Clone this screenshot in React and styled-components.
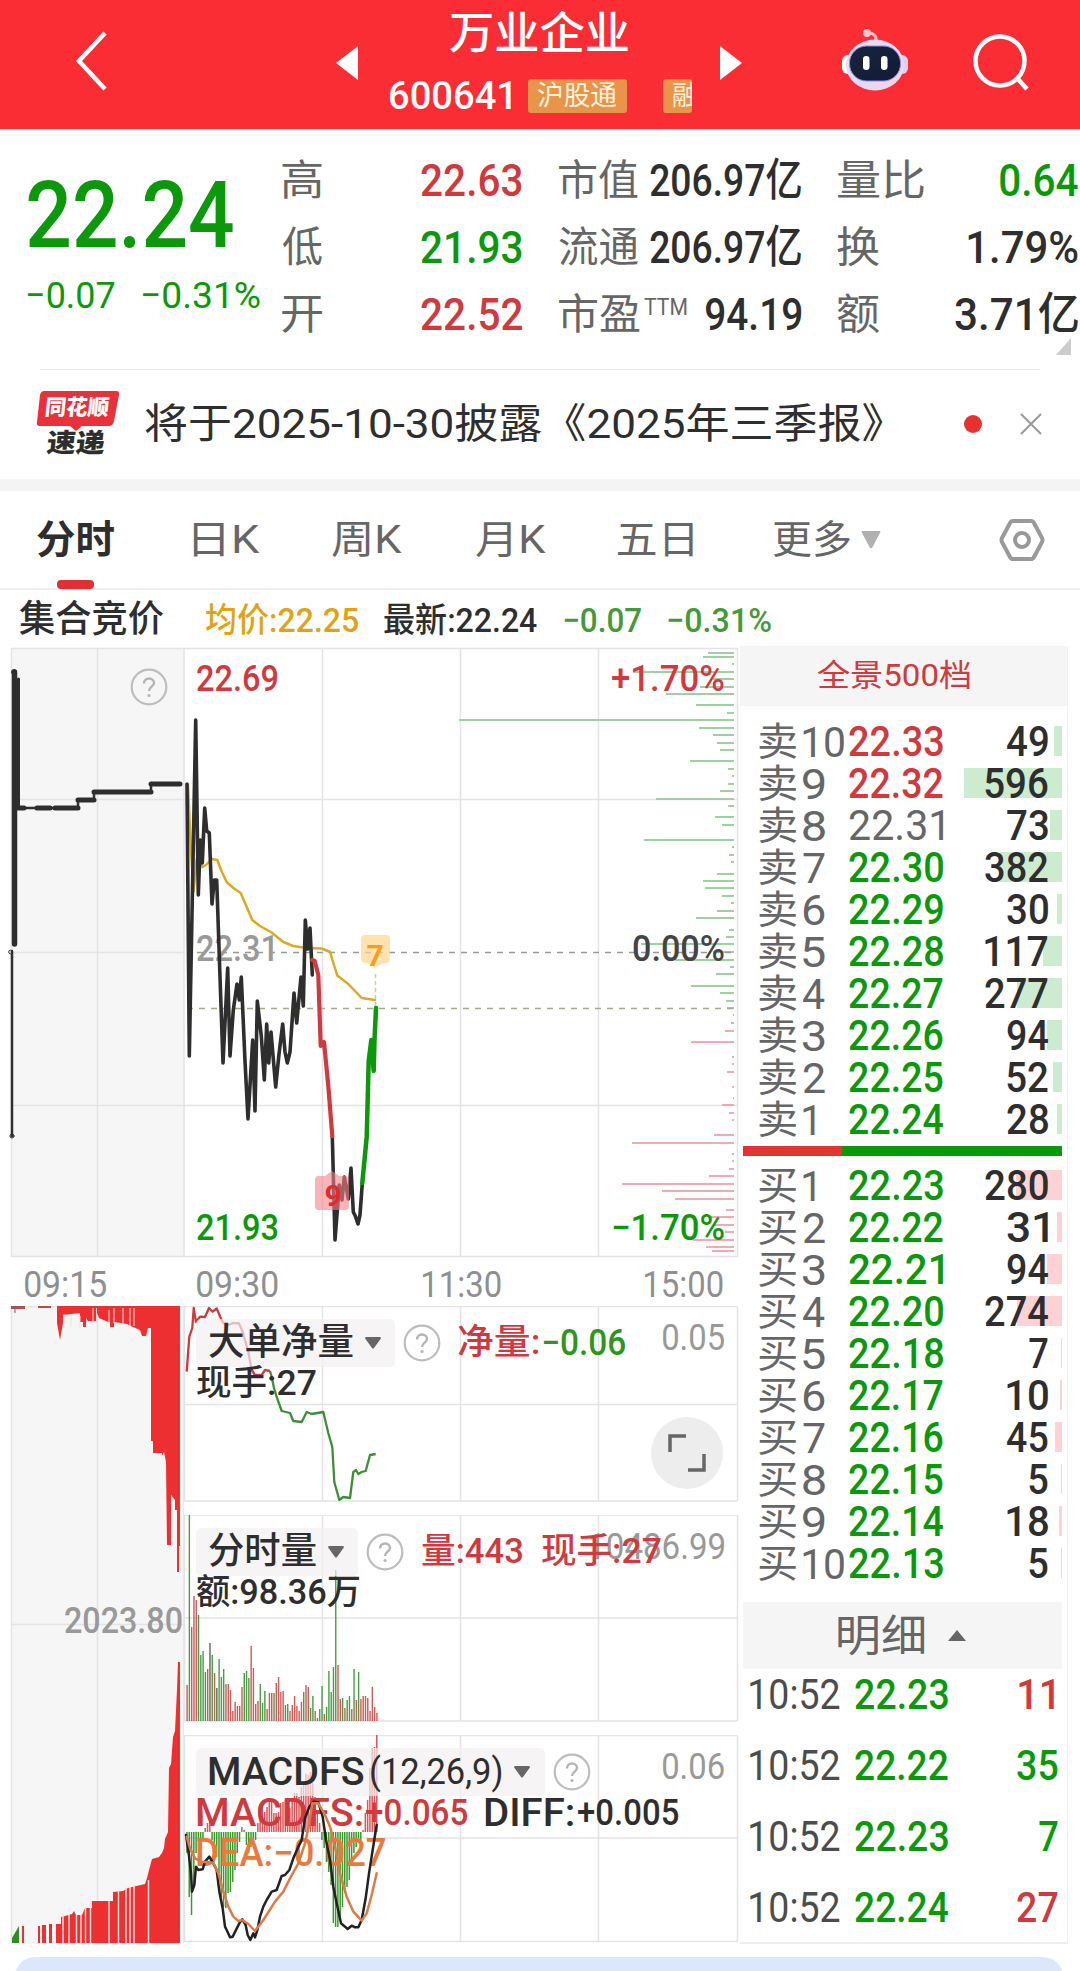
import React, { useLayoutEffect, useRef, useState } from "react";
import styled, { createGlobalStyle } from "styled-components";

const RED = "#d03a3e";
const GREEN = "#0b980b";
const DARK = "#2e2e2e";
const GREY = "#666";
const GRID = "#e4e4e6";

const sells = [
  ["卖10", "22.33", 49, RED],
  ["卖9", "22.32", 596, RED],
  ["卖8", "22.31", 73, GREY],
  ["卖7", "22.30", 382, GREEN],
  ["卖6", "22.29", 30, GREEN],
  ["卖5", "22.28", 117, GREEN],
  ["卖4", "22.27", 277, GREEN],
  ["卖3", "22.26", 94, GREEN],
  ["卖2", "22.25", 52, GREEN],
  ["卖1", "22.24", 28, GREEN],
];

const buys = [
  ["买1", "22.23", 280, GREEN],
  ["买2", "22.22", 31, GREEN],
  ["买3", "22.21", 94, GREEN],
  ["买4", "22.20", 274, GREEN],
  ["买5", "22.18", 7, GREEN],
  ["买6", "22.17", 10, GREEN],
  ["买7", "22.16", 45, GREEN],
  ["买8", "22.15", 5, GREEN],
  ["买9", "22.14", 18, GREEN],
  ["买10", "22.13", 5, GREEN],
];

// price, quantity, colour, drawn width of the quantity
const deals = [
  ["22.23", "11", RED, 35],
  ["22.22", "35", GREEN, 41],
  ["22.23", "7", GREEN, 19],
  ["22.24", "27", RED, 41],
];

// [y, length] of the price distribution bars
const distUp = [
  [653, 26], [657, 31], [664, 2], [672, 101], [679, 21], [687, 34], [694, 68],
  [705, 38], [713, 7], [720, 275], [728, 35], [735, 21], [743, 17], [750, 14],
  [761, 44], [769, 6], [776, 2], [784, 6], [791, 14], [799, 78], [806, 6],
  [817, 19], [825, 12], [840, 90], [847, 2], [855, 5], [862, 3], [874, 17],
  [881, 31], [888, 29], [896, 12], [903, 3], [911, 17], [918, 38], [930, 5],
  [937, 8], [944, 93], [952, 21], [960, 59], [967, 4], [974, 18], [986, 43],
  [993, 14], [1001, 8], [1008, 7],
];
const distDown = [
  [1015, 1], [1023, 3], [1031, 9], [1042, 43], [1057, 2], [1064, 2], [1072, 7],
  [1087, 2], [1098, 1], [1105, 12], [1113, 5], [1120, 2], [1135, 20],
  [1143, 102], [1154, 2], [1161, 2], [1169, 5], [1176, 25], [1184, 112],
  [1191, 72], [1199, 59], [1210, 8], [1217, 26], [1225, 21], [1232, 9],
  [1240, 41], [1247, 28], [1251, 22],
];

const priceA =
  "187,784 189.3,1056 195.7,720 198.3,895 200.3,840 202.3,863 204.7,808 206.7,831 209.3,833 212,904 214.3,880 216.7,880 220,977 223,1063 227.7,968 230,1056 233.3,1010 237,984 239.3,1000 241.3,977 245,1061 248,1119 252.7,1040 255,1111 257.3,1001 261.3,1036 264.3,1080 266.7,1024 268.7,1063 271,1032 275.7,1087 279,1054 282.7,1024 285,1052 287.3,1063 290,1052 294,993 296.7,1023 301,977 303.3,1006 305.3,920 307.7,949 310,928 312.3,975";
const priceRed =
  "312.3,960 314.7,961 318.3,975 320.7,1046 324,1042 328.3,1086 332.3,1136";
const priceB =
  "332.3,1136 335,1240 339.3,1185 342,1200 344.3,1177 348.3,1199 351,1168 353.3,1212 355.3,1216 358,1224 360,1215 362.3,1183";
const priceGreen =
  "362.3,1183 366.7,1137 368.7,1061 371.3,1040 373.7,1071 374.5,1040 376,1008";
const average =
  "188,785 191,850 193.5,892 196.7,859 202.3,867 206,865 211.7,859 217.3,860 221.7,871.5 226.7,882 233.3,888 240.7,893 246.7,907 252.3,920 260,926 271.7,932.5 283.3,942 293.3,946 306.7,948 321.7,948.5 330,952 334.3,966 337.3,975.5 348.3,984 361.7,998 375,1000";

const netRed =
  "186.7,1371.7 189.3,1336.7 192.3,1328 193.7,1308 196,1322 200,1316.7 205,1317 209,1308 212.7,1311.7 216.7,1308.5 220.7,1318 223.3,1323 228,1325 233.3,1323 239,1323.5 242.7,1332 248.3,1352 251.7,1370 255,1375 261.7,1375 265,1370 270,1371";
const netGreen =
  "270,1371 271.7,1377 274,1388 276.7,1397 281.7,1411 290,1413 293.3,1421 301.7,1422 306.7,1412 311.7,1414 323.3,1412 328.3,1433 332.3,1447 334.3,1482 339.3,1500 343.3,1497 350,1498 353.3,1472 356,1470 358.3,1474 361.7,1472 365.7,1471 370,1455 375.7,1454";

const volumes =
  "36r 207g 94r 125r 121r 106g 66g 70g 49g 52r 78k 66g 48r 33k 62g 44g 52g 37r 37r 31r 10r 19r 15r 15r 34r 48g 50g 43g 75r 53r 17r 20r 37g 18g 30g 12r 28r 28r 28g 38r 44r 29r 30r 16g 17g 10r 16r 25r 15r 10r 19r 29g 36r 34r 13g 25g 10r 3g 12g 35g 7r 14g 50g 29g 54g 151g 56r 22r 23g 13r 21g 25g 12r 52g 21r 49g 22r 25r 25r 23r 10r 34r 14r 8r"
    .split(" ");

// signed bar heights around the zero line
const macd = [
  -21, -65, -83, -53, -21, -9, -8, -6, 4, 9, 11, -8, -15, -25, -41, -65, -75,
  -76, -61, -60, -50, -38, -21, -10, 5, 2, -13, -21, -15, -11, -8, 9, 17, 12,
  20, 25, 32, 30, 19, 19, 20, 29, 30, 32, 25, 24, 32, 39, 39, 35, 45, 50, 58,
  57, 60, 49, 35, 22, 9, -8, -16, -30, -40, -53, -91, -95, -95, -85, -75, -61,
  -55, -48, -31, -21, -15, -11, -8, 2, 19, 32, 64, 84, 85, 98,
];

// drawn on a grid three times finer than a pixel
const diffLine =
  "558,585 566,640 573,700 576,755 583,735 588,680 595,690 608,688 615,665 628,650 640,670 650,690 658,755 668,805 675,860 680,870 690,892 698,890 707,872 718,850 727,838 737,855 743,885 751,900 760,880 765,892 772,870 780,830 790,800 800,780 815,755 830,750 845,708 855,705 868,690 880,655 893,625 905,600 915,535 928,500 940,485 955,487 968,530 978,600 990,660 1000,740 1010,790 1023,850 1035,860 1043,867 1055,857 1065,862 1075,862 1085,840 1097,775 1107,700 1118,630 1130,555";
const deaLine =
  "560,590 570,625 585,655 605,665 640,668 655,700 670,755 685,800 700,830 715,843 727,840 745,852 765,873 790,840 825,785 850,755 870,715 895,670 915,610 925,565 937,490 955,490 975,525 990,560 1005,620 1020,700 1040,770 1060,815 1085,842 1100,820 1115,765 1130,700";

const auctionTop =
  "57,1306 57,1323 60,1340 63,1323 63,1315 80,1313 80,1322 83,1322 83,1327 86,1327 86,1318 88,1321 96,1321 97,1313 99,1318 108,1322 110,1322 110,1327 114,1327 114,1322 127,1324 133,1327 140,1330 142,1336 146,1336 148,1328 151,1328 151,1441 153,1441 153,1453 162,1453 162,1456 164,1452 166,1462 167,1545 171,1545 171,1495 175,1500 175,1510 177,1510 177,1572 179,1572 179,1546 180,1546 180,1306";
const auctionBottom =
  "56,1943 56,1924 61,1924 61,1917 65,1916 72,1914 74,1911 76,1915 82,1915 85,1908 92,1908 92,1901 113,1901 113,1892 123,1891 128,1888 145,1884 147,1878 149,1870 152,1859 159,1857 162,1853 164,1848 165,1839 168,1832 169,1768 171,1764 173,1737 175,1731 177,1690 178,1662 180,1662 180,1943";

// Squeezes a run of text horizontally so that its ink is exactly w wide
const Fit = ({ w, children, ...rest }) => {
  const ref = useRef(null);
  const [transform, setTransform] = useState("none");

  useLayoutEffect(() => {
    const css = getComputedStyle(ref.current);
    const ctx = document.createElement("canvas").getContext("2d");
    ctx.font = `${css.fontWeight} ${css.fontSize} ${css.fontFamily}`;
    const m = ctx.measureText(ref.current.textContent);
    const ink = m.actualBoundingBoxLeft + m.actualBoundingBoxRight;
    const k = w / ink;
    setTransform(`translateX(${m.actualBoundingBoxLeft * k}px) scaleX(${k})`);
  }, [w, children]);

  return (
    <FitBox $w={w} {...rest}>
      <FitInner ref={ref} style={{ transform }}>
        {children}
      </FitInner>
    </FitBox>
  );
};

const Help = () => (
  <HelpIcon viewBox="0 0 38 38">
    <circle cx="19" cy="19" r="17.3" fill="none" stroke="#bdbdbd" strokeWidth="2.2" />
    <path
      d="M14 15.5c0-3 2.200-5 5-5s5 1.900 5 4.500c0 3.500-5 4-5 8"
      fill="none"
      stroke="#b4b4b4"
      strokeWidth="2.400"
    />
    <circle cx="19" cy="27.500" r="1.600" fill="#b4b4b4" />
  </HelpIcon>
);

const Header = () => (
  <TopBar>
    <svg width="36" height="62" viewBox="0 0 36 62">
      <path d="M32 3 6 31l26 28" fill="none" stroke="#fff" strokeWidth="4.500" />
    </svg>
    <Triangle $ml={227} viewBox="0 0 22 34">
      <path d="M22 0v34L0 17z" fill="#fff" />
    </Triangle>
    <TitleBlock>
      <Fit w={178} $size={44} $weight={500}>万业企业</Fit>
      <CodeRow>
        <Fit w={121} $size={39} $weight={500}>600641</Fit>
        <Tag $w={99} $ml={17}>
          <Fit w={79} $size={27}>沪股通</Fit>
        </Tag>
        <Tag $w={29} $ml={36}>
          <Fit w={25} $size={27}>融</Fit>
        </Tag>
      </CodeRow>
    </TitleBlock>
    <Triangle $ml={29} viewBox="0 0 22 34">
      <path d="M0 0v34l22-17z" fill="#fff" />
    </Triangle>
    <Robot />
    <SearchIcon viewBox="0 0 60 60">
      <circle cx="27" cy="27" r="24.500" />
      <path d="m44 44 10 11" />
    </SearchIcon>
  </TopBar>
);

const Robot = () => (
  <RobotSvg viewBox="0 0 68 64">
    <defs>
      <linearGradient id="shell" x1="0" y1="0" x2="1" y2="1">
        <stop offset="0" stopColor="#fdd9e6" />
        <stop offset="0.5" stopColor="#dcdcfb" />
        <stop offset="1" stopColor="#ffd0dc" />
      </linearGradient>
      <linearGradient id="visor" x1="0" y1="0" x2="1" y2="1">
        <stop offset="0" stopColor="#16253f" />
        <stop offset="1" stopColor="#141a35" />
      </linearGradient>
    </defs>
    <path d="M35 14c1-7-3-9-8-9" fill="none" stroke="#ffb9c8" strokeWidth="3" />
    <circle cx="26" cy="5" r="4" fill="#ffc3d0" />
    <rect x="1" y="27" width="12" height="19" rx="6" fill="#fff" />
    <rect x="55" y="27" width="12" height="19" rx="6" fill="#e9ccf4" />
    <ellipse cx="34" cy="37" rx="29" ry="25.500" fill="url(#shell)" />
    <rect x="8.500" y="18" width="51" height="35" rx="17" fill="url(#visor)" stroke="#8d8bea" strokeWidth="1" />
    <rect x="22" y="28" width="6.500" height="14" rx="3.200" fill="#fff" />
    <rect x="40" y="28" width="6.500" height="14" rx="3.200" fill="#fff" />
  </RobotSvg>
);

const Quote = () => (
  <QuoteBox>
    <PriceBlock>
      <Fit w={205} $size={93} $lh={80} $weight={500}>22.24</Fit>
      <ChangeRow>
        <Fit w={87} $size={37}>−0.07</Fit>
        <Fit w={117} $size={37}>−0.31%</Fit>
      </ChangeRow>
    </PriceBlock>
    <StatColumn>
      <Stat label="高" lw={40} value="22.63" w={101} color={RED} />
      <Stat label="低" lw={40} value="21.93" w={101} color={GREEN} />
      <Stat label="开" lw={40} value="22.52" w={101} color={RED} />
    </StatColumn>
    <StatColumn>
      <Stat label="市值" lw={79} value="206.97亿" w={151} color={DARK} />
      <Stat label="流通" lw={79} value="206.97亿" w={151} color={DARK} />
      <Stat label="市盈" lw={81} sup="TTM" value="94.19" w={95} color={DARK} />
    </StatColumn>
    <StatColumn>
      <Stat label="量比" lw={87} value="0.64" w={78} color={GREEN} />
      <Stat label="换" lw={42} value="1.79%" w={110} color={DARK} />
      <Stat label="额" lw={42} value="3.71亿" w={123} color={DARK} />
    </StatColumn>
    <Corner viewBox="0 0 15 17">
      <path d="M15 0v17H0z" fill="#ccc" />
    </Corner>
  </QuoteBox>
);

const Stat = ({ label, lw, sup, value, w, color }) => (
  <StatRow>
    <StatLabel>
      <Fit w={lw} $size={42} $color={GREY}>{label}</Fit>
      {sup && (
        <Sup>
          <Fit w={43} $size={23} $color={GREY}>{sup}</Fit>
        </Sup>
      )}
    </StatLabel>
    <Fit w={w} $size={45} $weight={500} $color={color}>{value}</Fit>
  </StatRow>
);

const Notice = () => (
  <NoticeBar>
    <Logo>
      <LogoShape viewBox="0 0 84 66">
        <path d="M8 0h72q4 0 3 4l-5 26q-1 5-5 5H46l-6 5-6-5H4q-4 0-3-4L4 4q1-4 4-4z" fill="#e8313a" />
      </LogoShape>
      <LogoTop><Fit w={63} $size={22} $lh={22} $weight={900} $color="#fff">同花顺</Fit></LogoTop>
      <LogoBottom><Fit w={58} $size={26} $lh={26} $weight={900}>速递</Fit></LogoBottom>
    </Logo>
    <Fit w={738} $size={41} $color={DARK}>将于2025-10-30披露《2025年三季报》</Fit>
    <Dot />
    <svg width="24" height="24" viewBox="0 0 24 24">
      <path d="m2 2 20 20M22 2 2 22" stroke="#999" strokeWidth="2" />
    </svg>
  </NoticeBar>
);

const Tabs = () => (
  <TabBar>
    <Tab $active $ml={37}><Fit w={77} $size={39} $weight={700}>分时</Fit></Tab>
    <Tab $ml={79}><Fit w={67} $size={39}>日K</Fit></Tab>
    <Tab $ml={72}><Fit w={70} $size={39}>周K</Fit></Tab>
    <Tab $ml={74}><Fit w={70} $size={39}>月K</Fit></Tab>
    <Tab $ml={72}><Fit w={75} $size={39}>五日</Fit></Tab>
    <Tab $ml={80}>
      <Fit w={77} $size={39}>更多</Fit>
      <svg width="20" height="18" viewBox="0 0 20 18">
        <path d="M1 0h18q1 1 0 2l-8 15h-2L1 2Q0 1 1 0z" fill="#b0b0b0" />
      </svg>
    </Tab>
    <Settings viewBox="0 0 46 44">
      <path d="M14 3h18q2 0 3 2l8 15q1 2 0 4l-8 15q-1 2-3 2H14q-2 0-3-2L3 24q-1-2 0-4l8-15q1-2 3-2z" />
      <circle cx="23" cy="22" r="7" />
    </Settings>
  </TabBar>
);

const Bars = ({ rows, color }) =>
  rows.map(([y, len]) => (
    <rect key={y} x={734 - len} y={y - 1} width={len} height="2" fill={color} />
  ));

const Label = ({ x, y, w, color, children }) => (
  <ChartText x={x} y={y} textLength={w} lengthAdjust="spacingAndGlyphs" fill={color}>
    {children}
  </ChartText>
);

const PriceChart = () => (
  <Chart width="740" height="611" viewBox="0 647 740 611">
    <rect x="11" y="648" width="173" height="609" fill="#f6f6f6" />
    <g stroke={GRID} strokeWidth="1.500">
      <path d="M11 648.500H737M11 799.500H737M11 952.500H184M11 1105.500H737M11 1256.500H737" />
      <path d="M11.500 648V1257M97.500 648V1257M184 648V1257M322.500 648V1257M460.500 648V1257M598.500 648V1257M737.500 648V1257" />
    </g>
    <Bars rows={distUp} color="#a0cfa2" />
    <Bars rows={distDown} color="#f0abb2" />
    <Label x={196} y={961} w={83} color="#999">22.31</Label>
    <path d="M197 952.500H737" stroke="#999" strokeWidth="1.600" strokeDasharray="6 6" />
    <path d="M187 1008.500H737" stroke="#a3ad8b" strokeWidth="1.600" strokeDasharray="6 6" />
    <path d="M375.500 974V1008" stroke="#d8c9a0" strokeWidth="1.500" strokeDasharray="4 3" />

    <g fill="none" stroke={DARK} strokeLinejoin="round" strokeLinecap="round">
      <path d="M12 951V1136" strokeWidth="2.500" />
      <path d="M14.500 672V944" strokeWidth="5.500" />
      <path d="M18.500 679V808" strokeWidth="3" />
      <path d="M18 808H24M37 808H50M55 808H78M78 800H94M94 792H151M151 784H180" strokeWidth="5" />
      <path d="M18 808H78V800H94V792H151V784" strokeWidth="2.500" />
      <circle cx="14" cy="672" r="2.500" />
      <circle cx="10.500" cy="952" r="1.800" />
      <circle cx="12" cy="1136" r="2" />
    </g>

    <g fill="none" strokeWidth="3.600" strokeLinejoin="round" strokeLinecap="round">
      <polyline points={average} stroke="#dca921" strokeWidth="2.500" />
      <polyline points={priceA} stroke={DARK} />
      <polyline points={priceB} stroke={DARK} />
      <polyline points={priceRed} stroke={RED} strokeWidth="4.200" />
      <polyline points={priceGreen} stroke={GREEN} strokeWidth="4.500" />
    </g>

    <path d="M365 935h21q4 0 4 4v20q0 4-4 4h-3l-8 5-7-5h-3q-4 0-4-4v-20q0-4 4-4z" fill="#ffd68e" fillOpacity="0.7" transform="translate(0 -1) scale(1 1.001)" />
    <BadgeText x="375" y="966" fill="#f0a21c">7</BadgeText>
    <path d="M319 1176h6l7-5 7 5h6q4 0 4 4v26q0 4-4 4h-26q-4 0-4-4v-26q0-4 4-4z" fill="#f58289" fillOpacity="0.6" />
    <BadgeText x="333" y="1206" fill="#dc2c30">9</BadgeText>

    <Label x={196} y={691} w={83} color={RED}>22.69</Label>
    <Label x={196} y={1240} w={83} color={GREEN}>21.93</Label>
    <Label x={611} y={691} w={114} color={RED}>+1.70%</Label>
    <Label x={632} y={961} w={93} color="#444">0.00%</Label>
    <Label x={611} y={1240} w={114} color={GREEN}>−1.70%</Label>
  </Chart>
);

const AuctionVolume = () => (
  <Chart width="184" height="638" viewBox="0 1306 184 638">
    <rect x="11" y="1306" width="173" height="638" fill="#f6f6f6" />
    <path d="M11.500 1306V1943M97.500 1306V1943M184 1306V1943M11 1306.500H184M11 1624.500H184" stroke={GRID} strokeWidth="1.500" />
    <g fill="#ee2f31">
      <path d="M11 1306h14v3H11zM38 1306h13v2H38z" fill="#b2514c" />
      <polygon points={auctionTop} />
      <polygon points={auctionBottom} />
      <path d="M22 1926h2v17h-2zM38 1926h2v17h-2zM42 1925h4v18h-4zM49 1924h3v19h-3z" />
      <path d="M12 1943v-5l7-12v17z" fill="#2f8d28" />
      <path d="M15 1306v7" stroke="#666" />
    </g>
    <path
      d="M64 1314v14M71 1315v12M80 1316v12M93 1308v14M96.500 1308v14M109 1310v14M114 1308v15M123 1308v16M130 1308v18M134 1308v18"
      stroke="#f6dcdc"
      strokeWidth="1"
    />
    <path
      d="M63 1913v30M69 1913v30M76.500 1914v29M81 1914v29M85.500 1908v35M90.500 1900v43M109 1900v43M118.500 1890v53M126 1887v56M130 1886v57M134 1885v58M148.500 1880v63"
      stroke="#f9e3e3"
      strokeWidth="1.400"
    />
    <Label x={64} y={1633} w={119} color="#999">2023.80</Label>
  </Chart>
);

const GridLines = ({ top, mid, bottom }) => (
  <path
    d={`M184 ${top}H737M184 ${mid}H737M184 ${bottom}H737M184.500 ${top}V${bottom}M322.500 ${top}V${bottom}M460.500 ${top}V${bottom}M598.500 ${top}V${bottom}M737.500 ${top}V${bottom}`}
    fill="none"
    stroke={GRID}
    strokeWidth="1.500"
  />
);

const NetPanel = () => (
  <Panel>
    <Chart width="556" height="196" viewBox="184 1306 556 196">
      <GridLines top={1306.5} mid={1404.5} bottom={1501} />
      <g fill="none" strokeWidth="2.300" strokeLinejoin="round">
        <polyline points={netRed} stroke={RED} />
        <polyline points={netGreen} stroke="#3c8f35" />
      </g>
    </Chart>
    <Scale><Fit w={61} $size={36} $color="#999">0.05</Fit></Scale>
    <Legend>
      <LegendRow>
        <Chip $w={199}>
          <Fit w={144} $size={37} $weight={500}>大单净量</Fit>
          <Caret />
        </Chip>
        <Help />
        <Fit w={80} $ml={17} $size={35} $weight={500} $color={RED}>净量:</Fit>
        <Fit w={82} $ml={5} $size={36} $weight={500} $color="#2f951f">−0.06</Fit>
      </LegendRow>
      <LegendLine>
        <Fit w={119} $size={35} $weight={500}>现手:27</Fit>
      </LegendLine>
    </Legend>
    <Expand>
      <svg width="40" height="40" viewBox="0 0 40 40">
        <path d="M3 19V3h16M37 21v16H21" fill="none" stroke="#666" strokeWidth="3.500" />
      </svg>
    </Expand>
  </Panel>
);

const VolumePanel = () => (
  <Panel>
    <Chart width="556" height="207" viewBox="184 1515 556 207">
      <GridLines top={1515} mid={1618} bottom={1721} />
      {volumes.map((v, i) => {
        const h = parseInt(v);
        const color = { r: "#cc5a55", g: "#4a9c44", k: "#5d6a52" }[v.slice(-1)];
        return (
          <rect key={i} x={186.4 + i * 2.287} y={1721 - h} width="1.400" height={h} fill={color} />
        );
      })}
    </Chart>
    <Scale><Fit w={134} $size={36} $color="#999">10486.99</Fit></Scale>
    <Legend>
      <LegendRow>
        <Chip $w={162}>
          <Fit w={107} $size={37} $weight={500}>分时量</Fit>
          <Caret />
        </Chip>
        <Help />
        <Fit w={100} $ml={18} $size={35} $weight={500} $color={RED}>量:443</Fit>
        <Fit w={119} $ml={20} $size={35} $weight={500} $color={RED}>现手:27</Fit>
      </LegendRow>
      <LegendLine>
        <Fit w={162} $size={35} $weight={500}>额:98.36万</Fit>
      </LegendLine>
    </Legend>
  </Panel>
);

const MacdPanel = () => (
  <Panel>
    <Chart width="556" height="208" viewBox="184 1735 556 208">
      <GridLines top={1735.5} mid={1838} bottom={1941.5} />
      {macd.map((h, i) => (
        <rect
          key={i}
          x={186.2 + i * 2.287}
          y={h > 0 ? 1832 - h : 1832}
          width="1.500"
          height={Math.abs(h)}
          fill={h > 0 ? "#dc5558" : "#3c9a2c"}
        />
      ))}
    </Chart>
    <Scale><Fit w={61} $size={36} $color="#999">0.06</Fit></Scale>
    <Legend>
      <LegendRow>
        <Chip $w={349}>
          <Fit w={155} $size={39} $weight={500}>MACDFS</Fit>
          <Fit w={130} $ml={7} $size={36}>(12,26,9)</Fit>
          <Caret $ml={13} />
        </Chip>
        <Help />
      </LegendRow>
      <LegendLine>
        <Fit w={165} $size={39} $weight={500} $color={RED}>MACDFS:</Fit>
        <Fit w={101} $ml={4} $size={36} $weight={500} $color={RED}>+0.065</Fit>
        <Fit w={88} $ml={18} $size={39} $weight={500}>DIFF:</Fit>
        <Fit w={100} $ml={5} $size={36} $weight={500}>+0.005</Fit>
      </LegendLine>
      <LegendLine>
        <Fit w={188} $size={38} $weight={500} $color="#e87a40">DEA:−0.027</Fit>
      </LegendLine>
    </Legend>
    <Overlay width="556" height="208" viewBox="552 285 1668 624">
      <g fill="none" strokeWidth="7.500" strokeLinejoin="round" strokeLinecap="round">
        <polyline points={diffLine} stroke="#222" />
        <polyline points={deaLine} stroke="#dc7a4a" />
      </g>
    </Overlay>
  </Panel>
);

const Caret = ({ $ml }) => (
  <CaretSvg $ml={$ml} viewBox="0 0 16 12">
    <path d="M1 0h14q1.500 1 .5 2L9 11q-1 1-2 0L.5 2Q-.5 1 1 0z" fill="#666" />
  </CaretSvg>
);

const BookRow = ({ row, side }) => {
  const [label, price, qty, color] = row;
  const digits = String(qty).length;
  return (
    <Level>
      <Fit w={37} $size={39} $color={GREY}>{label[0]}</Fit>
      <LevelNo>
        <Fit w={label.length > 2 ? 41 : label[1] === "1" ? 12 : 22} $size={43} $color={GREY}>
          {label.slice(1)}
        </Fit>
      </LevelNo>
      <Fit w={94} $size={42} $weight={color === GREY ? 400 : 500} $color={color}>{price}</Fit>
      <Qty>
        <QtyBar $side={side} style={{ width: Math.max(qty * 0.164, 1) }} />
        <Fit w={[19, 41, 63][digits - 1]} $size={42} $weight={500} $color={DARK}>{qty}</Fit>
      </Qty>
    </Level>
  );
};

export default function App() {
  return (
    <Screen>
      <GlobalStyle />
      <Header />
      <Quote />
      <Notice />
      <Tabs />
      <InfoRow>
        <Fit w={145} $size={37} $weight={500}>集合竞价</Fit>
        <Fit w={152} $ml={42} $size={34} $weight={500} $color="#dfa416">均价:22.25</Fit>
        <Fit w={153} $ml={26} $size={34} $weight={500}>最新:22.24</Fit>
        <Fit w={77} $ml={27} $size={34} $weight={500} $color="#45993a">−0.07</Fit>
        <Fit w={103} $ml={27} $size={34} $weight={500} $color="#45993a">−0.31%</Fit>
      </InfoRow>
      <Main>
        <Charts>
          <PriceWrap>
            <PriceChart />
            <AuctionHelp><Help /></AuctionHelp>
          </PriceWrap>
          <TimeAxis>
            <Fit w={81} $size={36}>09:15</Fit>
            <Fit w={81} $ml={91} $size={36}>09:30</Fit>
            <Fit w={78} $ml={145} $size={36}>11:30</Fit>
            <Fit w={78} $ml={144} $size={36}>15:00</Fit>
          </TimeAxis>
          <SubCharts>
            <AuctionVolume />
            <Panels>
              <NetPanel />
              <VolumePanel />
              <MacdPanel />
            </Panels>
          </SubCharts>
        </Charts>
        <Book>
          <BookHead>
            <Fit w={153} $size={31} $color={RED}>全景500档</Fit>
          </BookHead>
          <Levels>
            {sells.map((x) => <BookRow key={x[0]} row={x} side="sell" />)}
          </Levels>
          <Ratio />
          <Levels>
            {buys.map((x) => <BookRow key={x[0]} row={x} side="buy" />)}
          </Levels>
          <DealHead>
            <Fit w={86} $size={43} $color={GREY}>明细</Fit>
            <svg width="18" height="11" viewBox="0 0 18 11">
              <path d="M9 0l9 11H0z" fill="#666" />
            </svg>
          </DealHead>
          {deals.map(([price, qty, color, w], i) => (
            <Deal key={i}>
              <Fit w={90} $size={42} $color="#4c4c4c">10:52</Fit>
              <Fit w={93} $ml={15} $size={42} $weight={500} $color={GREEN}>{price}</Fit>
              <DealQty $narrow={qty === "11"}>
                <Fit w={w} $size={42} $weight={500} $color={color}>{qty}</Fit>
              </DealQty>
            </Deal>
          ))}
        </Book>
      </Main>
      <BottomSheet />
    </Screen>
  );
}

const GlobalStyle = createGlobalStyle`
  * {
    box-sizing: border-box;
  }

  body {
    margin: 0;
    background: #fff;
    font-family: Roboto, "Noto Sans CJK SC", sans-serif;
    color: #2e2e2e;
  }
`;

const Screen = styled.div`
  width: 1080px;
  height: 1971px;
  overflow: hidden;
  display: flex;
  flex-direction: column;
`;

const FitBox = styled.span`
  display: block;
  flex: none;
  width: ${(p) => p.$w}px;
  height: ${(p) => p.$lh || 42}px;
  line-height: ${(p) => p.$lh || 42}px;
  margin-left: ${(p) => p.$ml || 0}px;
  font-size: ${(p) => p.$size}px;
  font-weight: ${(p) => p.$weight || 400};
  color: ${(p) => p.$color || "inherit"};
`;

const FitInner = styled.span`
  display: inline-block;
  white-space: nowrap;
  transform-origin: 0 50%;
  vertical-align: top;
`;

const TopBar = styled.header`
  display: flex;
  flex: none;
  height: 129px;
  padding-left: 73px;
  background: #fa2d34;
  color: #fff;

  > svg:first-child {
    margin-top: 30px;
  }
`;

const Triangle = styled.svg`
  flex: none;
  width: 22px;
  height: 34px;
  margin-top: 46px;
  margin-left: ${(p) => p.$ml}px;
`;

const TitleBlock = styled.div`
  display: flex;
  flex-direction: column;
  align-items: center;
  width: 302px;
  margin-left: 31px;
  padding: 13px 2px 0 0;
`;

const CodeRow = styled.div`
  display: flex;
  align-items: center;
  width: 302px;
  margin: 20px -2px 0 2px;
`;

const Tag = styled.div`
  flex: none;
  width: ${(p) => p.$w}px;
  height: 34px;
  margin-left: ${(p) => p.$ml}px;
  padding-left: 10px;
  overflow: hidden;
  border-radius: 3px;
  background: #e8954b;
  color: #fff3dc;

  > span {
    height: 34px;
    line-height: 34px;
  }
`;

const RobotSvg = styled.svg`
  width: 68px;
  height: 64px;
  margin: 28px 0 0 99px;
`;

const SearchIcon = styled.svg`
  width: 60px;
  height: 60px;
  margin: 34px 0 0 64px;
  fill: none;
  stroke: #fff;
  stroke-width: 4.5;
`;

const QuoteBox = styled.section`
  position: relative;
  display: flex;
  flex: none;
  height: 240px;
  padding: 19px 1px 0 28px;

  &::after {
    content: "";
    position: absolute;
    left: 40px;
    right: 40px;
    bottom: -1px;
    height: 1px;
    background: #e8e8e8;
  }
`;

const PriceBlock = styled.div`
  width: 254px;
  padding-top: 28px;
  color: ${GREEN};
`;

const ChangeRow = styled.div`
  display: flex;
  gap: 28px;
  margin-top: 19px;
`;

const StatColumn = styled.div`
  display: flex;
  flex-direction: column;
  width: 240px;
  height: 200px;

  & + & {
    width: 242px;
    margin-left: 37px;
  }

  & + & + & {
    width: 241px;
    margin-left: 36px;
  }
`;

const StatRow = styled.div`
  display: flex;
  flex: 1;
  align-items: center;
  justify-content: space-between;
`;

const StatLabel = styled.div`
  display: flex;
`;

const Sup = styled.div`
  margin: -7px 0 0 4px;
`;

const Corner = styled.svg`
  position: absolute;
  right: 9px;
  bottom: 14px;
  width: 15px;
  height: 17px;
`;

const NoticeBar = styled.section`
  display: flex;
  flex: none;
  align-items: center;
  height: 122px;
  padding-left: 36px;
  border-bottom: 12px solid #f4f4f4;
`;

const Logo = styled.div`
  position: relative;
  width: 84px;
  height: 66px;
  margin-right: 25px;
`;

const LogoShape = styled.svg`
  display: block;
  width: 84px;
  height: 66px;
`;

const LogoTop = styled.div`
  position: absolute;
  top: 6px;
  left: 10px;
  transform: skewX(-6deg);
`;

const LogoBottom = styled.div`
  position: absolute;
  top: 39px;
  left: 11px;
  transform: skewX(-6deg);
`;

const Dot = styled.i`
  width: 18px;
  height: 18px;
  margin: 0 37px 0 81px;
  border-radius: 50%;
  background: #e8312f;
`;

const TabBar = styled.nav`
  display: flex;
  flex: none;
  height: 99px;
  padding-top: 28px;
  border-bottom: 2px solid #efefef;
`;

const Tab = styled.div`
  position: relative;
  display: flex;
  margin-left: ${(p) => p.$ml}px;
  color: ${(p) => (p.$active ? DARK : GREY)};

  > svg {
    margin: 12px 0 0 11px;
  }

  &::after {
    content: "";
    display: ${(p) => (p.$active ? "block" : "none")};
    position: absolute;
    left: 20px;
    bottom: -1px;
    width: 37px;
    height: 9px;
    border-radius: 4px;
    background: #e0302f;
  }
`;

const Settings = styled.svg`
  width: 46px;
  height: 44px;
  margin: -1px 0 0 118px;
  fill: none;
  stroke: #999;
  stroke-width: 4;
`;

const InfoRow = styled.div`
  display: flex;
  flex: none;
  align-items: center;
  height: 57px;
  padding: 3px 0 0 19px;
`;

const Main = styled.main`
  display: flex;
  flex: none;
  height: 1297px;
`;

const Charts = styled.div`
  width: 740px;
`;

const Chart = styled.svg`
  display: block;
  flex: none;
`;

const ChartText = styled.text`
  font-size: 36px;
  font-weight: 500;
`;

const BadgeText = styled.text`
  font-size: 30px;
  font-weight: 700;
  text-anchor: middle;
`;

const PriceWrap = styled.div`
  position: relative;
`;

const AuctionHelp = styled.div`
  position: absolute;
  left: 122px;
  top: 21px;
`;

const HelpIcon = styled.svg`
  display: block;
  flex: none;
  width: 38px;
  height: 38px;
  margin-left: 8px;
`;

const TimeAxis = styled.div`
  display: flex;
  height: 48px;
  padding: 6px 0 0 25px;
  color: #8f8f8f;
`;

const SubCharts = styled.div`
  display: flex;
`;

const Panels = styled.div`
  display: flex;
  flex-direction: column;
  gap: 13px;
`;

const Panel = styled.div`
  position: relative;
`;

const Legend = styled.div`
  position: absolute;
  top: 12px;
  left: 12px;
`;

const LegendRow = styled.div`
  display: flex;
  align-items: center;
  height: 49px;
`;

const LegendLine = styled.div`
  display: flex;
  height: 40px;
  padding-left: 1px;
  line-height: 40px;
  margin-top: -4px;

  & + & {
    margin-top: 0;
  }
`;

const Chip = styled.div`
  display: flex;
  align-items: center;
  width: ${(p) => p.$w}px;
  height: 48px;
  padding: 1px 0 0 13px;
  border-radius: 5px;
  background: rgba(242, 239, 240, 0.7);
`;

const CaretSvg = styled.svg`
  width: 16px;
  height: 12px;
  margin-left: ${(p) => p.$ml || 12}px;
`;

const Scale = styled.div`
  position: absolute;
  top: 11px;
  right: 16px;
`;

const Expand = styled.div`
  position: absolute;
  right: 17px;
  bottom: 13px;
  display: flex;
  align-items: center;
  justify-content: center;
  width: 72px;
  height: 72px;
  border-radius: 50%;
  background: #ededed;
`;

const Overlay = styled.svg`
  position: absolute;
  inset: 0;
`;

const Book = styled.div`
  width: 328px;
  padding-left: 3px;
  border-right: 1px solid #f0f0f0;
  border-bottom: 2px solid #f0f0f0;
`;

const BookHead = styled.div`
  display: flex;
  align-items: center;
  justify-content: center;
  height: 60px;
  margin: -1px 0 14px -3px;
  padding-right: 20px;
  background: #f5f5f6;
`;

const Levels = styled.div`
  display: flex;
  flex-direction: column;
  padding: 0 5px 0 16px;
`;

const Level = styled.div`
  display: flex;
  align-items: center;
  height: 42px;
  padding-top: 1px;
`;

const LevelNo = styled.div`
  width: 46px;
  margin-left: 7px;
`;

const Qty = styled.div`
  position: relative;
  display: flex;
  flex: 1;
  justify-content: flex-end;
  padding-right: 14px;
`;

const QtyBar = styled.i`
  position: absolute;
  top: 5px;
  right: 0;
  height: 30px;
  background: ${(p) => (p.$side === "sell" ? "#cdebcf" : "#fdd2d5")};
`;

const Ratio = styled.div`
  height: 10px;
  margin: 6px 5px 8px 0;
  background: linear-gradient(to right, #e33434 99px, #0b980b 99px);
`;

const DealHead = styled.div`
  display: flex;
  align-items: center;
  height: 67px;
  margin: 18px 5px 0 0;
  padding-left: 95px;
  gap: 24px;
  background: #f5f5f6;
`;

const Deal = styled.div`
  display: flex;
  height: 71px;
  padding: 5px 9px 0 7px;
`;

const DealQty = styled.div`
  display: flex;
  flex: 1;
  justify-content: flex-end;
  padding-right: ${(p) => (p.$narrow ? 4 : 0)}px;
`;

const BottomSheet = styled.div`
  flex: none;
  width: 1048px;
  height: 40px;
  margin: 13px 0 0 15px;
  border-radius: 20px 20px 0 0;
  background: #dbe8fc;
`;
